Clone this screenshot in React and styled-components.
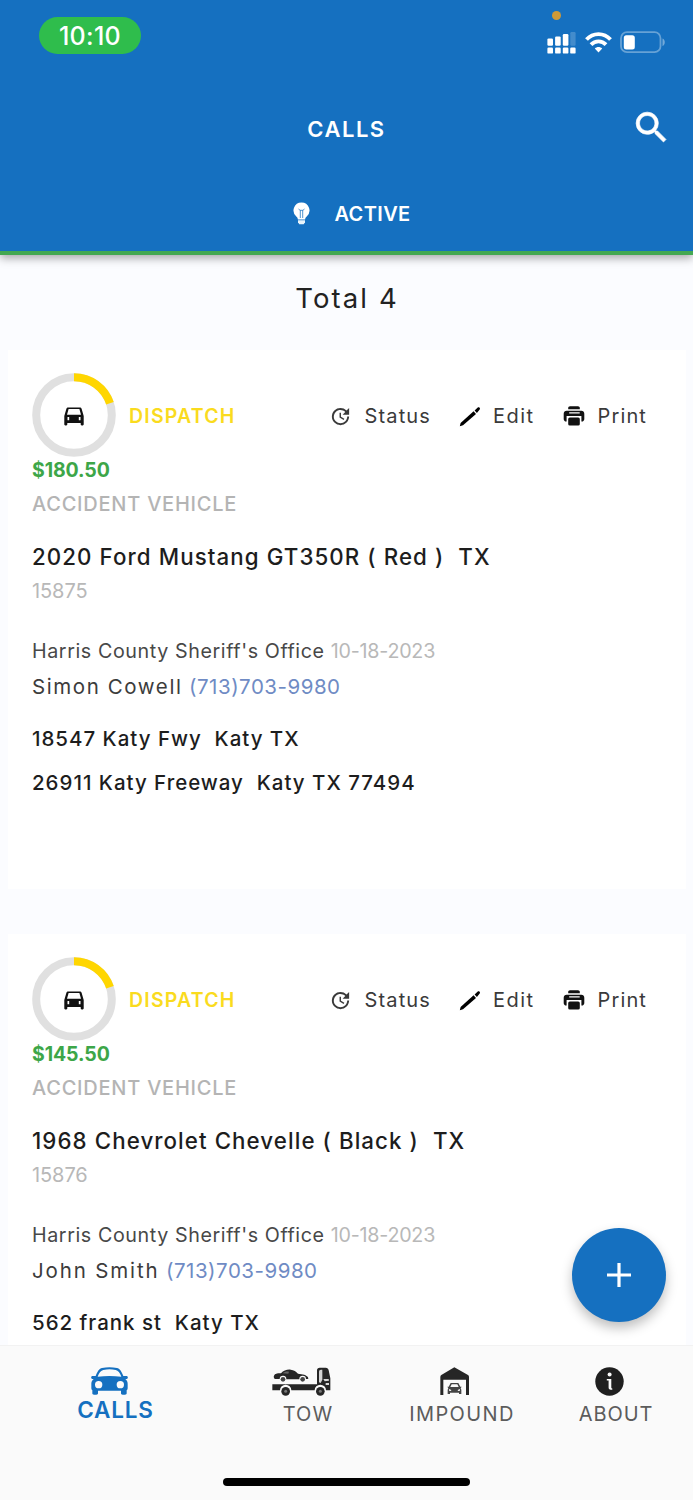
import React from 'react';
import styled, { createGlobalStyle } from 'styled-components';
import { MdSearch, MdUpdate } from 'react-icons/md';

const calls = [
	{
		id: '15875',
		price: '$180.50',
		vehicle: '2020 Ford Mustang GT350R ( Red )  TX',
		contact: 'Simon Cowell',
		contactSpacing: 1.59,
		addresses: ['18547 Katy Fwy  Katy TX', '26911 Katy Freeway  Katy TX 77494'],
	},
	{
		id: '15876',
		price: '$145.50',
		vehicle: '1968 Chevrolet Chevelle ( Black )  TX',
		contact: 'John Smith',
		contactSpacing: 1.86,
		addresses: ['562 frank st  Katy TX'],
	},
];

const SignalIcon = () => (
	<svg width="29" height="22" viewBox="0 0 29 22" fill="#fff">
		<rect x="0.4" y="6.4" width="5.6" height="7.4" rx="1.2" />
		<rect x="8.1" y="4.4" width="5.6" height="9.4" rx="1.2" />
		<rect x="15.8" y="2" width="5.6" height="11.8" rx="1.2" />
		<rect x="23.3" y="0" width="5.3" height="13.8" rx="1.2" opacity="0.2" />
		<rect x="0.4" y="15.6" width="5.6" height="6" rx="1.2" />
		<rect x="8.1" y="15.6" width="5.6" height="6" rx="1.2" />
		<rect x="15.8" y="15.6" width="5.6" height="6" rx="1.2" />
		<rect x="23.2" y="15.6" width="5.4" height="6" rx="1.2" />
	</svg>
)

const WifiIcon = () => (
	<svg width="27" height="21" viewBox="0 0 27 21" fill="none" stroke="#fff" strokeWidth="3.8">
		<path d="M1.5 7.6C8 0.4 19 0.4 25.5 7.6" />
		<path d="M6 12.6c4.2-4.4 10.8-4.4 15 0" />
		<path d="M9.8 16.4c2.2-2 5.2-2 7.400 0L13.500 20.600z" fill="#fff" stroke="none" />
	</svg>
)

const BatteryIcon = () => (
	<svg width="46" height="23" viewBox="0 0 46 23">
		<rect x="1" y="1.200" width="39.500" height="20" rx="6" fill="none" stroke="#fff" strokeOpacity="0.35" strokeWidth="1.800" />
		<rect x="3.800" y="4.200" width="11" height="14.200" rx="2.500" fill="#fff" />
		<path d="M42.500 7.500c3 1.200 3 6.300 0 7.500z" fill="#fff" opacity="0.4" />
	</svg>
)

const BulbIcon = () => (
	<svg width="17" height="23" viewBox="0 0 17 23">
		<path d="M8.500 0.500a8 8 0 0 0-5 14.200c.9.800 1.300 1.600 1.400 2.700h7.200c.1-1.100.5-1.900 1.400-2.700a8 8 0 0 0-5-14.200z" fill="#fff" />
		<path d="M5.500 7l1.800 1.500v7.500M11.500 7l-1.800 1.500v7.500M7 8.300h3" fill="none" stroke="#1570c0" strokeWidth="1" opacity="0.750" />
		<path d="M5 18.300h7v2l-1.300 1.900H6.300L5 20.300z" fill="#e8f4fb" />
	</svg>
)

const CarIcon = () => (
	<svg width="20" height="19" viewBox="0 0 20 19">
		<path fillRule="evenodd" d="M4.200.5h11.600c.9 0 1.500.5 1.800 1.300L19.700 9v8.300c0 .7-.4 1.100-1 1.100h-1c-.6 0-1-.4-1-1.100V16H3.300v1.300c0 .7-.4 1.100-1 1.100h-1c-.6 0-1-.4-1-1.100V9l2.100-7.200C2.700 1 3.300.5 4.200.5zM4.600 2.100L3 7.700h14l-1.600-5.600zM3.500 10v3.200h1.700V10zm11.300 0v3.200h1.700V10z" fill="#111" />
	</svg>
)

const PencilIcon = () => (
	<svg width="22" height="21" viewBox="0 0 22 21" fill="#000">
		<path d="M.8 20.300l.8-3.300L14.600 5.300l2.400 2.600L4 19.300z" />
		<path d="M15.600 4.400l2.900-2.700c.7-.6 1.500-.6 2.100 0 .6.700.5 1.500-.1 2.100L17.900 7z" />
	</svg>
)

const PrinterIcon = () => (
	<svg width="22" height="20" viewBox="0 0 22 20" fill="#111">
		<path d="M5.200 3.200V2C5.200 1 6 .3 7 .3h8c1 0 1.800.7 1.800 1.700v1.200z" />
		<path fillRule="evenodd" d="M3.600 4.700h14.800c1.700 0 2.900 1.300 2.900 3v5.200c0 1.500-1 2.600-2.500 2.600h-.4V10H3.600v5.500h-.4C1.700 15.500.7 14.400.7 12.900V7.700c0-1.700 1.200-3 2.900-3zm2.600 1.500v1.300h10.500V6.200z" />
		<rect x="5.200" y="11.400" width="11.600" height="8.200" rx="1.600" />
	</svg>
)

const CallsIcon = () => (
	<svg width="37" height="28" viewBox="0 0 111 84">
		<path fillRule="evenodd" d="M33 3q22-5 45 0c8 2 13 9 19 24h10c4 0 5 7 1 9h-5c6 5 7 9 7 16v12c0 3-1 5-3 6v9c0 3-2 4-5 4h-7c-3 0-5-1-5-4v-8H21v8c0 3-2 4-5 4H9c-3 0-5-1-5-4v-9c-2-1-3-3-3-6V52c0-7 1-11 7-16H3c-4-2-3-9 1-9h10C20 12 25 5 33 3zM37 9c-7 2-13 8-17 20q35-4 71 0C87 17 81 11 74 9q-18-4-37 0zM23 42a11 11 0 1 0 0 22 11 11 0 0 0 0-22zm65 0a11 11 0 1 0 0 22 11 11 0 0 0 0-22z" fill="#1570c0" />
	</svg>
)

// flatbed truck carrying a car
const TowIcon = () => (
	<svg width="59" height="29" viewBox="0 0 177 87">
		<path d="M5 30c1-7 5-10 13-11h9C35 10 45 7 56 8c10 1 16 5 22 12 14 1 26 4 30 11l1 5h-7a10 10 0 0 0-20 1H43a10 10 0 0 0-20-1H8z" fill="#262626" />
		<path d="M32 19c6-6 13-6 19-5l-2 6z" fill="#666" />
		<circle cx="33" cy="37" r="7" fill="#444" />
		<circle cx="92" cy="37" r="7" fill="#444" />
		<path d="M1 52h134V10c0-5 3-8 8-8h18c5 0 8 3 9 8l5 24v36h-13a17 17 0 0 0-34 0H58a17 17 0 0 0-34 0H1z" fill="#262626" />
		<path d="M141 46V14c0-4 2-6 6-6h4v30l-5 10z" fill="#d4d4d4" />
		<path d="M154 36h16l1 5-13 2zM161 48h10v6h-10z" fill="#d8d8d8" />
		<circle cx="41" cy="73" r="13" fill="#262626" />
		<circle cx="41" cy="73" r="4.500" fill="#777" />
		<circle cx="145" cy="73" r="13" fill="#262626" />
		<circle cx="145" cy="73" r="4.500" fill="#777" />
	</svg>
)

const ImpoundIcon = () => (
	<svg width="29" height="29" viewBox="0 0 87 87">
		<path d="M43 1l41 23q3 2 3 6v54h-9V38H10v46H1V30q0-4 3-6z" fill="#262626" />
		<path fillRule="evenodd" d="M32 48h23l6 11h4l-3 5 2 4v13h-7v-4H30v4h-7V68l2-4-3-5h4zM35 52l-4 8h25l-4-8z" fill="#444" />
		<path d="M27 66l7 3-1 3-6-1zM60 66l-7 3 1 3 6-1z" fill="#fafafa" />
	</svg>
)

const InfoIcon = () => (
	<svg width="29" height="29" viewBox="0 0 29 29">
		<circle cx="14.500" cy="14.500" r="14.200" fill="#1f1f1f" />
		<circle cx="14.600" cy="7.600" r="2" fill="#fafafa" />
		<path d="M11.800 12h4.500v8.400c0 .6.300.9 1 1v1.300h-1.500c-1.500 0-2.200-.8-2.200-2.200v-7h-1.800z" fill="#fafafa" />
	</svg>
)

const ProgressRing = () => (
	<Ring>
		<svg width="84" height="84" viewBox="0 0 84 84" fill="none" strokeWidth="8">
			<circle cx="42" cy="42" r="37.800" stroke="#e0e0e0" />
			<path d="M42 4.200A37.800 37.800 0 0 1 77.950 30.320" stroke="#ffd600" />
		</svg>
		<RingCenter><CarIcon /></RingCenter>
	</Ring>
)

const CallCard = ({ call }) => (
	<Card>
		<CardTop>
			<ProgressRing />
			<Stage>DISPATCH</Stage>
			<Actions>
				<Action $gap={13} $spacing={1.14}><MdUpdate size={23} />Status</Action>
				<Action $gap={12} $spacing={1.46}><PencilIcon />Edit</Action>
				<Action $gap={13} $spacing={1.13}><PrinterIcon />Print</Action>
			</Actions>
		</CardTop>
		<Price>{call.price}</Price>
		<Reason>ACCIDENT VEHICLE</Reason>
		<Vehicle>{call.vehicle}</Vehicle>
		<CallId>{call.id}</CallId>
		<Office>
			Harris County Sheriff's Office
			<CallDate>10-18-2023</CallDate>
		</Office>
		<Contact $spacing={call.contactSpacing}>
			{call.contact}
			<Phone>(713)703-9980</Phone>
		</Contact>
		{call.addresses.map((address) => (
			<Address key={address}>{address}</Address>
		))}
	</Card>
)

const App = () => {
	return (
		<>
			<GlobalStyle />
			<Screen>
				<Header>
					<StatusBar>
						<Clock>10:10</Clock>
						<StatusIcons>
							<SignalIcon />
							<WifiIcon />
							<BatteryIcon />
							<MicDot />
						</StatusIcons>
					</StatusBar>
					<TitleBar>
						<Title>CALLS</Title>
						<SearchButton><MdSearch size={41} /></SearchButton>
					</TitleBar>
					<ActiveTab>
						<BulbIcon />
						ACTIVE
					</ActiveTab>
				</Header>

				<Content>
					<Total>Total 4</Total>
					{calls.map((call) => <CallCard key={call.id} call={call} />)}
				</Content>

				<TabBar>
					<Tab $grow={1.5} $shift={13}>
						<CallsIcon />
						<TabLabel $active>CALLS</TabLabel>
					</Tab>
					<Tab $shift={13} $spacing={1.06}>
						<TowIcon />
						<TabLabel>TOW</TabLabel>
					</Tab>
					<Tab $shift={15} $spacing={1.37}>
						<ImpoundIcon />
						<TabLabel>IMPOUND</TabLabel>
					</Tab>
					<Tab $shift={14} $spacing={0.9}>
						<InfoIcon />
						<TabLabel>ABOUT</TabLabel>
					</Tab>
				</TabBar>

				<AddButton>
					<svg width="24" height="24" viewBox="0 0 24 24" stroke="#fff" strokeWidth="3.200">
						<path d="M12 0v24M0 12h24" />
					</svg>
				</AddButton>
				<HomeIndicator />
			</Screen>
		</>
	)
}

export default App;

const GlobalStyle = createGlobalStyle`
	* {
		box-sizing: border-box;
	}

	body {
		margin: 0;
		font-family: 'Inter', sans-serif;
		background: #fbfcff;
	}

	svg {
		display: block;
		flex: none;
	}
`

const Screen = styled.div`
	position: relative;
	display: flex;
	flex-direction: column;
	width: 693px;
	height: 1500px;
	overflow: hidden;
	background: #fbfcff;
	white-space: pre;
`

const Header = styled.header`
	position: relative;
	z-index: 1;
	flex: none;
	height: 255px;
	background: #1570c0;
	border-bottom: 4px solid #43a852;
	box-shadow: 0 3px 9px rgba(0, 0, 0, 0.35);
	color: #fff;
`

const StatusBar = styled.div`
	display: flex;
	justify-content: space-between;
	align-items: flex-start;
	height: 86px;
	padding: 17px 27px 0 39px;
`

const Clock = styled.div`
	width: 102px;
	height: 37px;
	border-radius: 19px;
	background: #2fbd4c;
	font-size: 25px;
	font-weight: 500;
	line-height: 39px;
	letter-spacing: 0.3px;
	text-align: center;
`

const StatusIcons = styled.div`
	position: relative;
	display: flex;
	align-items: center;
	gap: 8.5px;
	margin-top: 14px;
`

const MicDot = styled.span`
	position: absolute;
	top: -20px;
	left: 5px;
	width: 9px;
	height: 9px;
	border-radius: 50%;
	background: #cf9a38;
`

const TitleBar = styled.div`
	display: grid;
	grid-template-columns: 1fr auto 1fr;
	align-items: center;
	height: 86px;
	padding: 0 21px;
`

const Title = styled.h1`
	grid-column: 2;
	margin: 0;
	font-size: 22px;
	font-weight: 600;
	letter-spacing: 1.5px;
`

const SearchButton = styled.div`
	justify-self: end;
	margin-top: -4px;

	path:last-child {
		stroke: #fff;
		stroke-width: 0.4px;
	}
`

const ActiveTab = styled.div`
	display: flex;
	align-items: center;
	justify-content: center;
	gap: 25px;
	height: 83px;
	padding-left: 10px;
	font-size: 20px;
	font-weight: 600;
	letter-spacing: 0.35px;
`

const Content = styled.main`
	flex: 1;
	min-height: 0;
	overflow: hidden;
	padding: 0 7px 0 8px;
`

const Total = styled.div`
	height: 95px;
	line-height: 86px;
	font-size: 27.5px;
	letter-spacing: 2.1px;
	text-align: center;
	color: #222;
`

const Card = styled.section`
	height: 539px;
	margin-bottom: 45px;
	padding: 23px 39px 0 24px;
	background: #fff;
	color: #1d1d1d;
`

const CardTop = styled.div`
	display: flex;
	align-items: center;
	height: 84px;
`

const Ring = styled.div`
	position: relative;
	width: 84px;
	height: 84px;
`

const RingCenter = styled.div`
	position: absolute;
	top: 34px;
	left: 32px;
`

const Stage = styled.div`
	margin: 2px 0 0 13px;
	font-size: 19.5px;
	font-weight: 600;
	letter-spacing: 1.2px;
	color: #fadb1e;
`

const Actions = styled.div`
	display: flex;
	gap: 28px;
	margin: 2px 0 0 auto;
`

const Action = styled.div`
	display: flex;
	align-items: center;
	gap: ${(p) => p.$gap}px;
	font-size: 20px;
	letter-spacing: ${(p) => p.$spacing}px;
	color: #3a3a3a;
`

const Price = styled.div`
	height: 30px;
	line-height: 27px;
	font-size: 19.5px;
	font-weight: 700;
	letter-spacing: -0.1px;
	color: #3da648;
`

const Reason = styled.div`
	height: 53px;
	line-height: 34px;
	font-size: 20px;
	font-weight: 500;
	letter-spacing: 0.77px;
	color: #b4b4b4;
`

const Vehicle = styled.div`
	height: 34px;
	line-height: 33px;
	font-size: 22.3px;
	font-weight: 500;
	letter-spacing: 1.08px;
`

const CallId = styled.div`
	height: 59px;
	line-height: 34px;
	font-size: 20px;
	letter-spacing: -0.09px;
	color: #b8b8b8;
`

const Office = styled.div`
	height: 36px;
	line-height: 36px;
	font-size: 19.7px;
	letter-spacing: 0.59px;
	color: #484848;
`

const CallDate = styled.span`
	margin-left: 6px;
	letter-spacing: -0.22px;
	color: #b8b8b8;
`

const Contact = styled.div`
	height: 48px;
	line-height: 36px;
	font-size: 20.5px;
	letter-spacing: ${(p) => p.$spacing}px;
	color: #3c3c3c;
`

const Phone = styled.span`
	margin-left: 6.5px;
	letter-spacing: 0.51px;
	color: #6f8bc4;
`

const Address = styled.div`
	height: 44px;
	line-height: 44px;
	font-size: 20.5px;
	font-weight: 500;
	letter-spacing: 0.98px;
`

const TabBar = styled.nav`
	display: flex;
	flex: none;
	height: 155px;
	background: #fafafa;
	border-top: 1px solid #f2f2f2;
`

const Tab = styled.div`
	display: flex;
	flex: ${(p) => p.$grow || 1} 0 0;
	flex-direction: column;
	align-items: center;
	padding-top: 21px;
	letter-spacing: ${(p) => p.$spacing || 0.8}px;

	svg {
		margin-right: ${(p) => p.$shift}px;
	}
`

const TabLabel = styled.div`
	margin-top: ${(p) => (p.$active ? 1 : 4)}px;
	line-height: 28px;
	font-size: ${(p) => (p.$active ? 22.5 : 20)}px;
	font-weight: ${(p) => (p.$active ? 600 : 400)};
	color: ${(p) => (p.$active ? '#1570c0' : '#5c5c5c')};
`

const AddButton = styled.div`
	position: absolute;
	z-index: 2;
	top: 1228px;
	left: 572px;
	display: flex;
	align-items: center;
	justify-content: center;
	width: 94px;
	height: 94px;
	border-radius: 50%;
	background: #1570c0;
	box-shadow: 0 6px 12px rgba(0, 0, 0, 0.25);
`

const HomeIndicator = styled.div`
	position: absolute;
	bottom: 14px;
	left: 223px;
	width: 247px;
	height: 8px;
	border-radius: 4px;
	background: #000;
`
